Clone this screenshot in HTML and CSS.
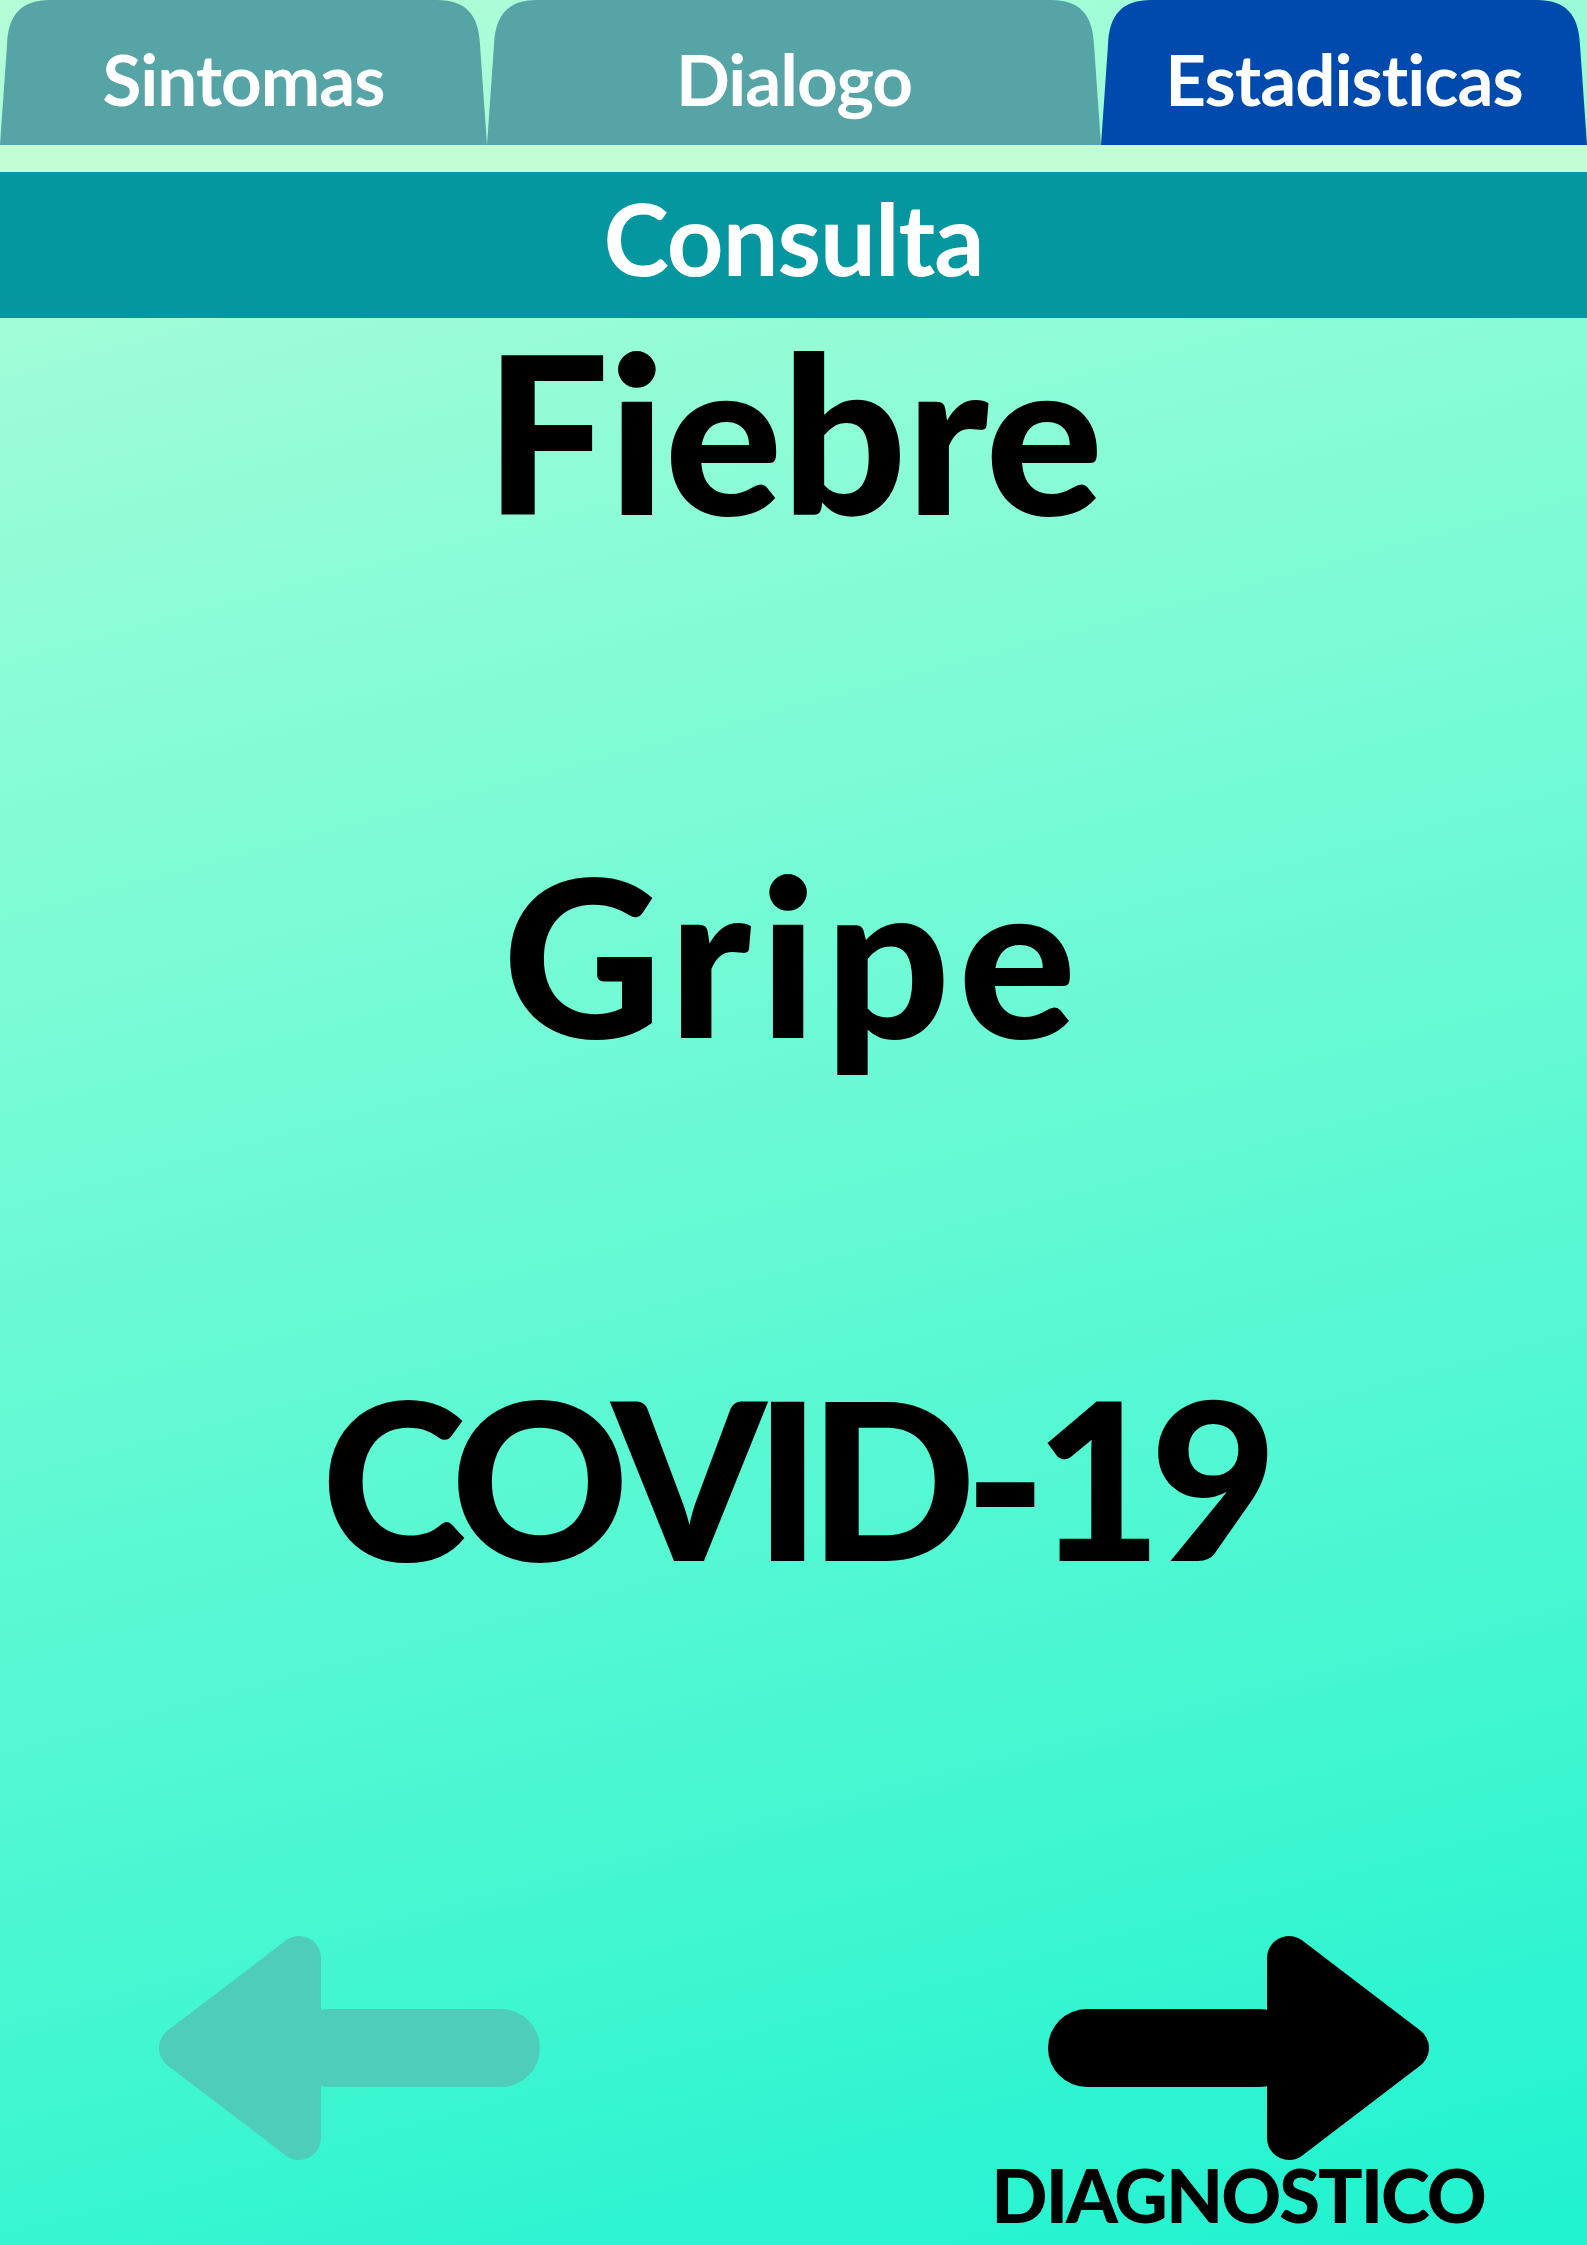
FILE: index.html
```html
<!DOCTYPE html>
<html lang="es">
<head>
<meta charset="utf-8">
<title>Consulta</title>
<link rel="stylesheet" href="styles.css">
</head>
<body>
<div class="page">
  <nav class="tabs">
    <div class="tab tab-1">
      <svg class="tab-shape" viewBox="0 0 487 145" preserveAspectRatio="none"><path d="M0 145 L7 45 C8 14 22 0 50 0 H437 C465 0 479 14 480 45 L487 145 Z"/></svg>
      <span class="tab-label">Sintomas</span>
    </div>
    <div class="tab tab-2">
      <svg class="tab-shape" viewBox="0 0 614 145" preserveAspectRatio="none"><path d="M0 145 L7 45 C8 14 22 0 50 0 H564 C592 0 606 14 607 45 L614 145 Z"/></svg>
      <span class="tab-label">Dialogo</span>
    </div>
    <div class="tab tab-3 active">
      <svg class="tab-shape" viewBox="0 0 486 145" preserveAspectRatio="none"><path d="M0 145 L7 45 C8 14 22 0 50 0 H436 C464 0 478 14 479 45 L486 145 Z"/></svg>
      <span class="tab-label">Estadisticas</span>
    </div>
  </nav>
  <div class="spacer-band"></div>
  <header class="header-band">
    <h1 class="header-title">Consulta</h1>
  </header>
  <main class="results">
    <p class="result result-fiebre">Fiebre</p>
    <p class="result result-gripe">Gripe</p>
    <p class="result result-covid">COVID-19</p>
  </main>
  <footer class="nav-row">
    <div class="nav-back">
      <svg class="arrow arrow-back" viewBox="0 0 381 224" width="381" height="224">
        <line x1="170" y1="112" x2="342" y2="112" stroke-width="78" stroke-linecap="round"/>
        <polygon points="22,112 140,22 140,202" stroke-width="44" stroke-linejoin="round"/>
      </svg>
    </div>
    <div class="nav-next">
      <svg class="arrow arrow-next" viewBox="0 0 381 224" width="381" height="224">
        <line x1="39" y1="112" x2="211" y2="112" stroke-width="78" stroke-linecap="round"/>
        <polygon points="359,112 241,22 241,202" stroke-width="44" stroke-linejoin="round"/>
      </svg>
      <span class="nav-label">DIAGNOSTICO</span>
    </div>
  </footer>
</div>
</body>
</html>
```

FILE: styles.css
```css
* {
  box-sizing: border-box;
}

html, body {
  margin: 0;
  padding: 0;
}

body {
  width: 1587px;
  height: 2245px;
  overflow: hidden;
  font-family: "Lato", "Liberation Sans", sans-serif;
  background: linear-gradient(165deg, #b4fdd7 0%, #8cfcd7 25%, #46f7d2 75%, #1ff2d0 100%);
}

.page {
  display: flex;
  flex-direction: column;
  width: 1587px;
  height: 2245px;
}

/* Tabs */
.tabs {
  display: flex;
  height: 145px;
}

.tab {
  position: relative;
  display: flex;
  justify-content: center;
  align-items: flex-start;
  padding-top: 43px;
  height: 145px;
}

.tab-1 { width: 487px; }
.tab-2 { width: 614px; }
.tab-3 { width: 486px; }

.tab-shape {
  position: absolute;
  left: 0;
  top: 0;
  width: 100%;
  height: 100%;
  fill: #56a4a6;
}

.tab.active .tab-shape {
  fill: #004aad;
}

.tab-label {
  position: relative;
  color: #ffffff;
  font-weight: 700;
  font-size: 71px;
  line-height: 1;
  letter-spacing: -1px;
}

.spacer-band {
  height: 27px;
  background: #c3fdd6;
}

/* Header */
.header-band {
  height: 146px;
  background: #05979f;
  display: flex;
  justify-content: center;
  align-items: flex-start;
  padding-top: 16px;
}

.header-title {
  margin: 0;
  color: #ffffff;
  font-weight: 700;
  font-size: 99px;
  line-height: 1;
  letter-spacing: -1px;
}

/* Results */
.results {
  height: 1618px;
  display: flex;
  flex-direction: column;
  align-items: center;
  gap: 303px;
  padding-top: 2px;
}

.result {
  margin: 0;
  color: #000000;
  font-weight: 900;
  font-size: 220px;
  line-height: 1;
  letter-spacing: -4px;
  white-space: nowrap;
}

.result-fiebre {
  letter-spacing: -1px;
}

.result-gripe {
  letter-spacing: 8px;
}

.result-covid {
  letter-spacing: -12px;
}

/* Footer navigation */
.nav-row {
  display: flex;
  justify-content: space-between;
  align-items: flex-start;
  padding: 0 110px 0 159px;
}

.nav-next {
  width: 478px;
  display: flex;
  flex-direction: column;
  align-items: center;
}

.arrow {
  display: block;
}

.arrow-back line,
.arrow-back polygon {
  fill: #4ecdba;
  stroke: #4ecdba;
}

.arrow-next line,
.arrow-next polygon {
  fill: #000000;
  stroke: #000000;
}

.nav-label {
  margin-top: -2px;
  color: #000000;
  font-weight: 900;
  font-size: 74px;
  line-height: 1;
  letter-spacing: -2px;
  white-space: nowrap;
}
```
